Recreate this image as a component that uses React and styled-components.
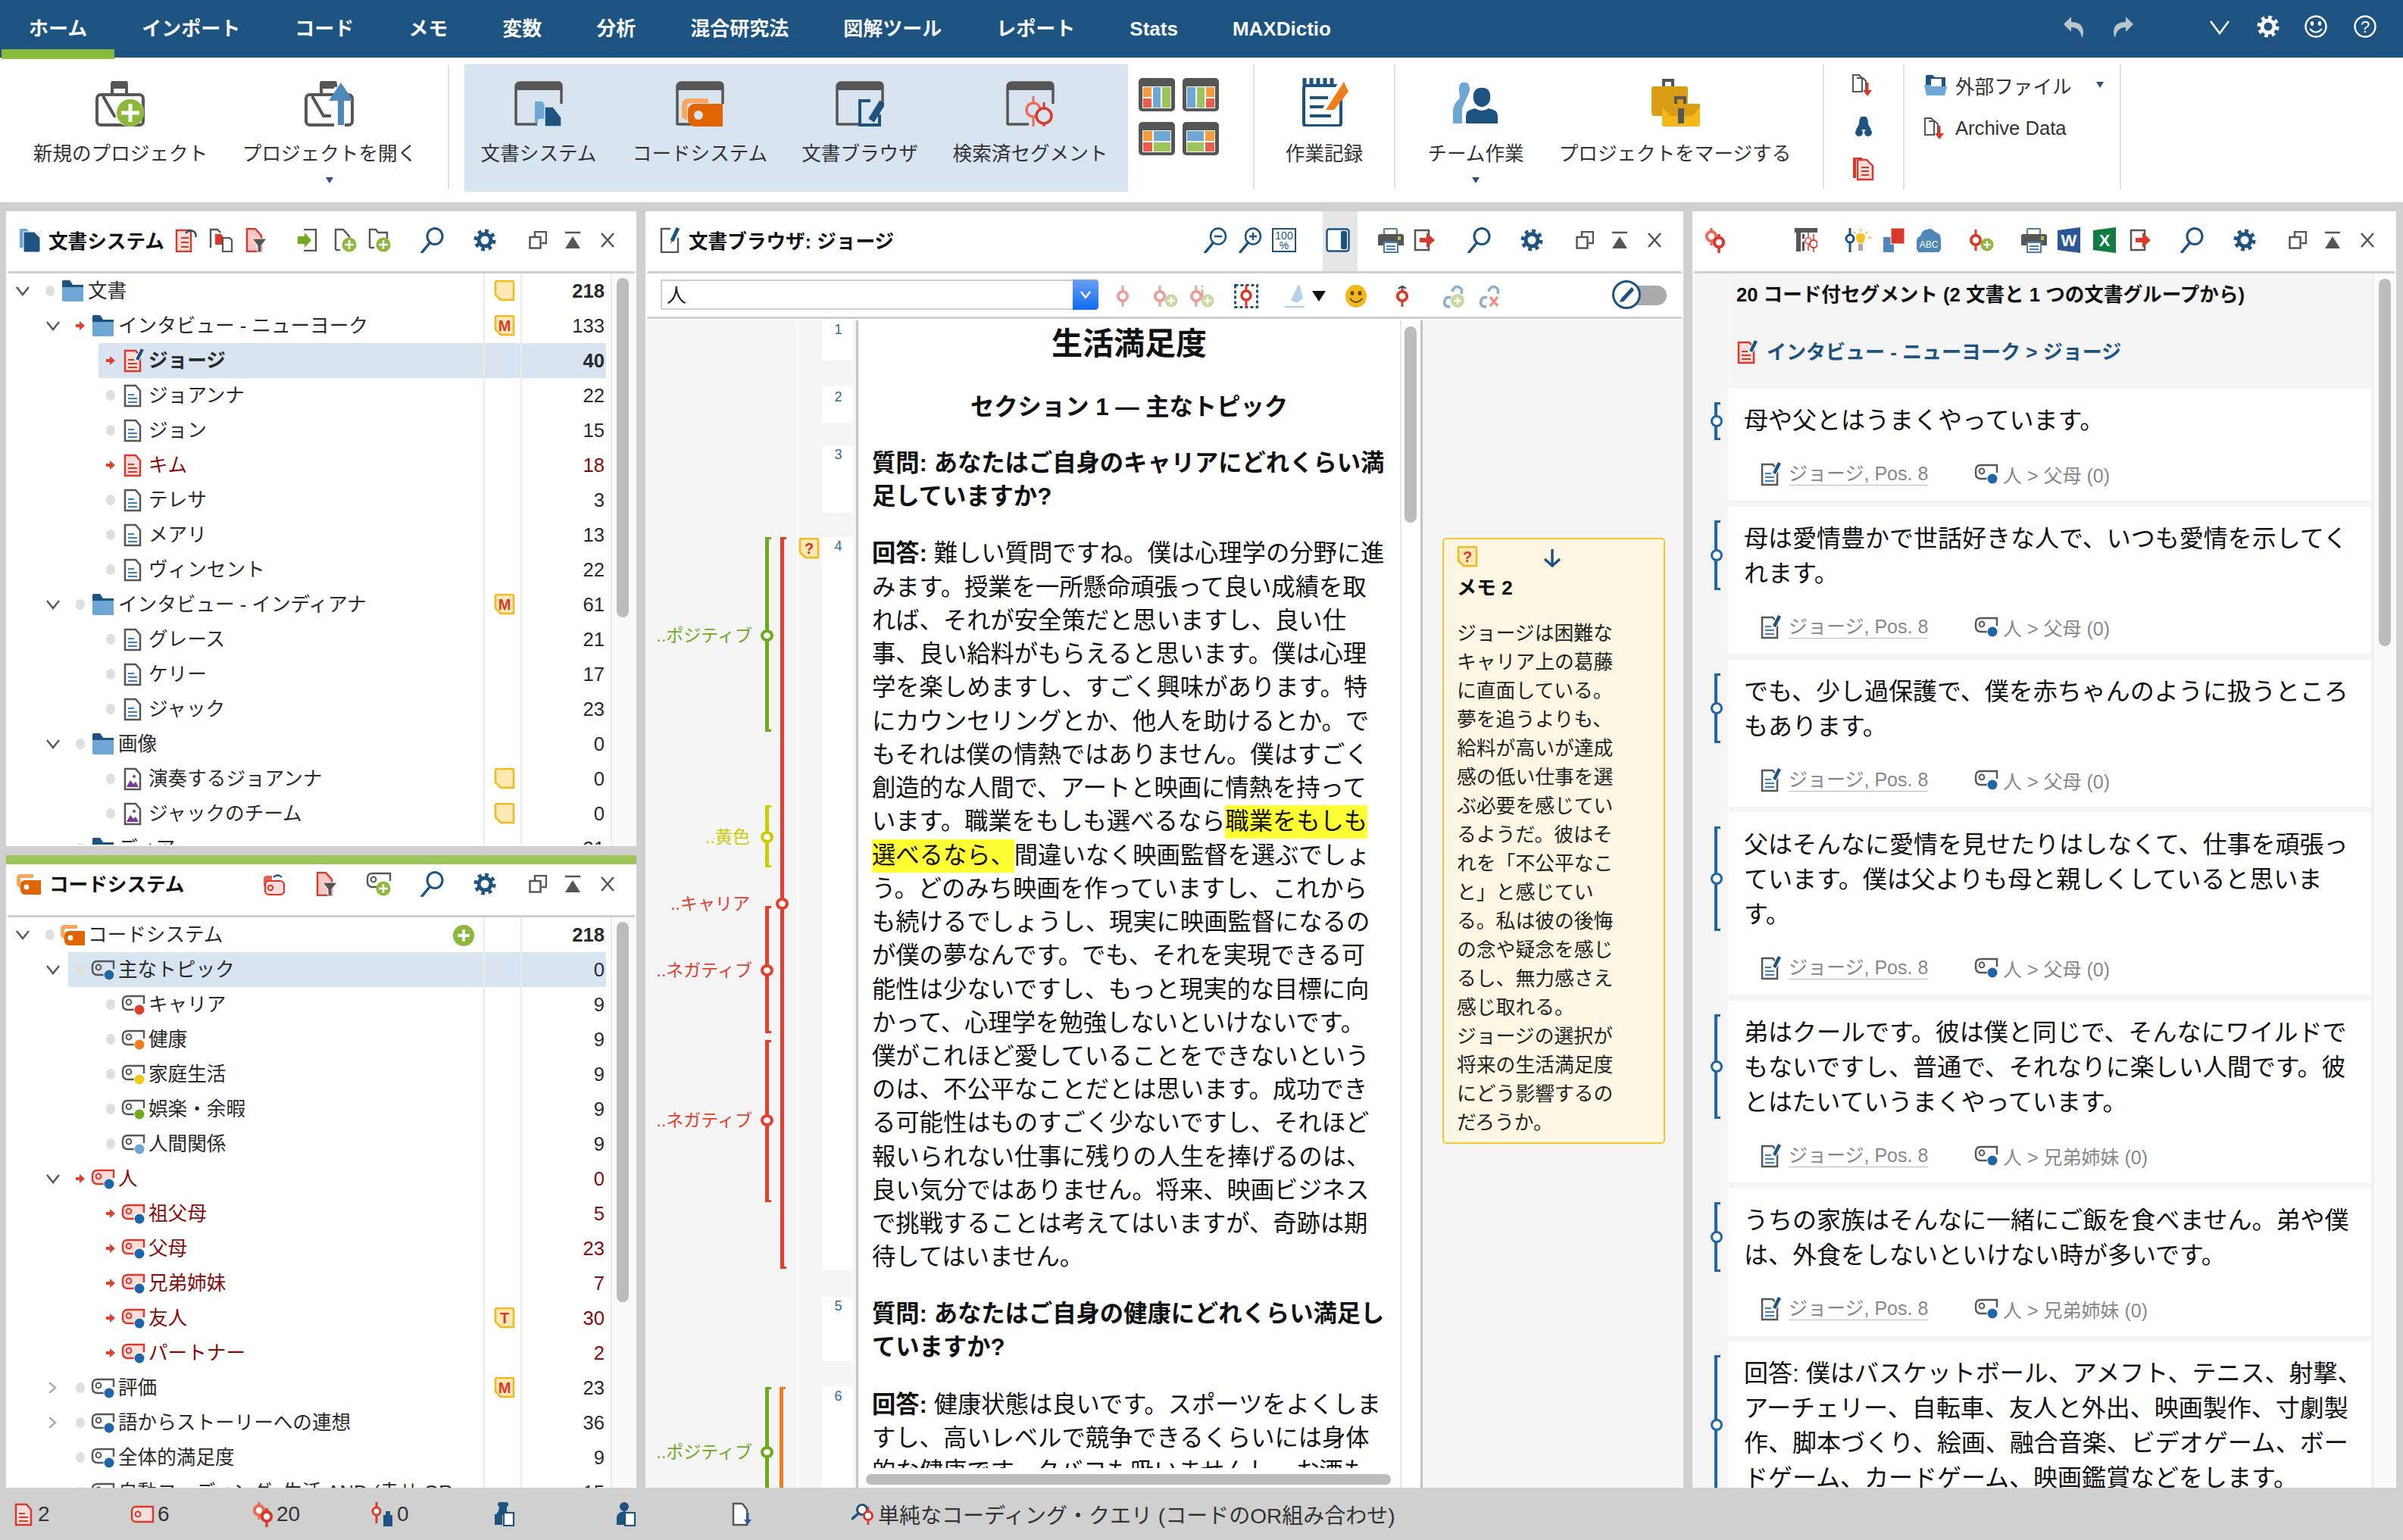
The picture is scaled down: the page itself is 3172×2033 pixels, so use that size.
import React from 'react';
import styled, { createGlobalStyle } from 'styled-components';

const NAVY = '#1d5380';
const RED = '#d8392b';
const DARK = '#565656';
const GREEN = '#8cb93b';
const SKY = '#6ea6d4';
const FONT = '"Liberation Sans", "Noto Sans CJK JP", sans-serif';

const Global = createGlobalStyle`
  html, body { margin: 0; padding: 0; background: #d0d0d0; }
  * { box-sizing: border-box; }
  body { font-family: ${FONT}; color: #222; }
  svg { display: block; flex: none; }
`;

const Page = styled.div`
  position: relative;
  width: 3172px;
  height: 2033px;
  overflow: hidden;
  background: #d0d0d0;
`;

/* ---------- icons ---------- */
const I = ({ w, h, children }) => <svg width={w} height={h} viewBox={`0 0 ${w} ${h}`} fill="none">{children}</svg>;

const Gear = ({ c = NAVY }) => (
  <I w={30} h={30}>
    <circle cx="15" cy="15" r="8" stroke={c} strokeWidth="5" />
    <circle cx="15" cy="15" r="12" stroke={c} strokeWidth="5" strokeDasharray="4.6 4.8" />
  </I>
);
const Search = ({ c = NAVY }) => (
  <I w={32} h={34}>
    <ellipse cx="20" cy="12" rx="10" ry="10.5" stroke={c} strokeWidth="3" />
    <path d="M13 21 3 33" stroke={c} strokeWidth="3.5" strokeLinecap="round" />
  </I>
);
const ZoomGlass = ({ plus, c = NAVY }) => (
  <I w={32} h={34}>
    <ellipse cx="20" cy="12" rx="10" ry="10.5" stroke={c} strokeWidth="2.5" />
    <path d="M13 21 3 33" stroke={c} strokeWidth="3.5" strokeLinecap="round" />
    <path d={plus ? 'M15 12h10M20 7v10' : 'M15 12h10'} stroke={c} strokeWidth="2.5" />
  </I>
);
const Restore = () => (
  <I w={24} h={24}>
    <path d="M8 7V1h15v15h-6" stroke={DARK} strokeWidth="2.5" />
    <rect x="1.5" y="8" width="14" height="14.5" stroke={DARK} strokeWidth="2.5" />
  </I>
);
const Collapse = () => (
  <I w={22} h={24}>
    <path d="M1 2h20" stroke={DARK} strokeWidth="2.5" />
    <path d="M11 7 21 23H1Z" fill={DARK} />
  </I>
);
const Close = () => (
  <I w={20} h={20}>
    <path d="M2 1 18 19M18 1 2 19" stroke={DARK} strokeWidth="2.6" />
  </I>
);
const Chev = ({ open = true }) => (
  <I w={20} h={14}>
    {open
      ? <path d="M2 2l8 10 8-10" stroke={DARK} strokeWidth="2.4" />
      : <path d="M5 0l8 7-8 7" stroke="#aaa" strokeWidth="2.4" />}
  </I>
);
const MiniArrow = () => (
  <I w={12} h={12}>
    <path d="M0 4h5V0l7 6-7 6V8H0Z" fill="#e2402e" />
  </I>
);
const Folder = () => (
  <I w={28} h={28}>
    <path d="M0 7V2q0-2 2-2h8l4 6h14v22H2q-2 0-2-2Z" fill={SKY} />
    <path d="M0 7V2q0-2 2-2h8l4 6h14v3H0Z" fill={NAVY} />
  </I>
);
const Doc = ({ tone = 'gray', pen }) => {
  const red = tone === 'red';
  const line = red ? RED : '#3d80c0';
  const edge = red ? RED : DARK;
  return (
    <I w={28} h={32}>
      <path d="M3 3h14l6 7v20H3Z" fill={red ? '#fbdedc' : '#fff'} stroke={edge} strokeWidth="2.5" />
      <path d="M7 15h8M7 20h12M7 25h12" stroke={line} strokeWidth="2.2" />
      {pen && <path d="M27 1 18 16" stroke="#fff" strokeWidth="7" />}
      {pen && <path d="M26 1 19 15" stroke={NAVY} strokeWidth="4.5" />}
    </I>
  );
};
const ImageDoc = () => (
  <I w={28} h={32}>
    <path d="M3 3h14l6 7v20H3Z" fill="#fff" stroke={DARK} strokeWidth="2.5" />
    <path d="M5 27l5-9 4 5 3-3 4 7Z" fill="#7a3b9a" />
    <circle cx="15" cy="13" r="2" fill="#7a3b9a" />
  </I>
);
const Note = ({ mark, w = 28, h = 28 }) => (
  <I w={w} h={h}>
    <path d="M2 3q0-2 2-2h20q2 0 2 2v23H9l-7-7Z" fill="#fde9b5" stroke="#f5b81c" strokeWidth="2.5" />
    {mark && <text x="14" y="21" textAnchor="middle" fontFamily={FONT} fontWeight="700" fontSize="20" fill={RED}>{mark}</text>}
  </I>
);
const CodeTag = ({ dot = '#1f66a8', active }) => (
  <I w={32} h={27}>
    <path d="M30 12V2H9Q2 2 2 9v4q0 7 7 7h10" fill={active ? '#fbdedc' : 'none'} stroke={active ? RED : DARK} strokeWidth="2.4" />
    <circle cx="10" cy="10" r="3.4" stroke={active ? RED : DARK} strokeWidth="2" />
    <circle cx="24" cy="20" r="7.5" fill="#fff" />
    <circle cx="24" cy="20" r="6.5" fill={dot} />
  </I>
);
const PlainTag = () => (
  <I w={32} h={24}>
    <path d="M8 2h22v20H8q-6 0-6-6V8q0-6 6-6Z" fill="#fbdedc" stroke={RED} strokeWidth="2.4" />
    <circle cx="10" cy="12" r="3.4" stroke={RED} strokeWidth="2" />
  </I>
);
const CodeSystem = () => (
  <I w={32} h={28}>
    <path d="M0 16V6q0-5 5-5h17v5H7q-2 0-2 2v12Z" fill="#f7a85c" />
    <rect x="5" y="9" width="27" height="19" rx="6" fill="#e06400" />
    <path d="M28 9h4v19h-6Z" fill="#e06400" />
    <circle cx="13" cy="18" r="3.4" fill="#fff" />
  </I>
);
const DocSystem = () => (
  <I w={30} h={32}>
    <path d="M1 2q0-1 1-1h8l3 3v22H1Z" fill={SKY} />
    <path d="M6 5h14l8 8v17q0 2-2 2H8q-2 0-2-2Z" fill={NAVY} stroke="#fff" strokeWidth="1" />
  </I>
);
const Plus = ({ r = 12, c = GREEN }) => (
  <I w={r * 2} h={r * 2}>
    <circle cx={r} cy={r} r={r} fill={c} />
    <path d={`M${r} ${r * 0.45}V${r * 1.55}M${r * 0.45} ${r}H${r * 1.55}`} stroke="#fff" strokeWidth={r * 0.28} />
  </I>
);
const Seg = ({ main = RED, back = '#ee6a58' }) => (
  <I w={28} h={34}>
    <path d="M9 1v23" stroke={back} strokeWidth="3.4" />
    <circle cx="9" cy="12" r="6.2" fill="#fff" stroke={back} strokeWidth="4" />
    <path d="M19 9v25" stroke={main} strokeWidth="3.4" />
    <circle cx="19" cy="20" r="6.2" fill="#fff" stroke={main} strokeWidth="4" />
  </I>
);
const OneSeg = ({ c = '#e8a09a', plus, info, undo, c2 = '#c7d99f' }) => (
  <I w={34} h={30}>
    <path d="M10 1v28" stroke={c} strokeWidth="3" />
    <circle cx="10" cy="15" r="6.2" fill="#fff" stroke={c} strokeWidth="3.8" />
    {info && <path d="M18 1v2M18 6v10" stroke="#e8a09a" strokeWidth="2.5" />}
    {plus && <circle cx="25" cy="21" r="8.5" fill={c2} />}
    {plus && <path d="M25 16v10M20 21h10" stroke="#fff" strokeWidth="2.4" />}
    {undo && <path d="M5 5q5-5 10 0" stroke={NAVY} strokeWidth="2.2" />}
  </I>
);
const Export = () => (
  <I w={30} h={30}>
    <path d="M20 9V2H2v26h18v-7" stroke={DARK} strokeWidth="2.5" />
    <path d="M8 12h9V5l11 10-11 10v-7H8Z" fill={RED} />
  </I>
);
const Printer = () => (
  <I w={34} h={34}>
    <path d="M8 10V3q0-1 1-1h15q1 0 1 1v7" stroke="#4a7fb0" strokeWidth="2" />
    <path d="M0 12q0-3 3-3h28q3 0 3 3v12H0Z" fill={DARK} />
    <rect x="26" y="12" width="4" height="5" fill="#9ccc5a" />
    <rect x="8" y="20" width="18" height="13" fill="#fff" stroke="#4a7fb0" strokeWidth="2" />
    <path d="M11 25h12M11 29h12" stroke="#4a7fb0" strokeWidth="2" />
  </I>
);
const Word = () => (
  <I w={30} h={34}>
    <path d="M0 4 30 0v34L0 30Z" fill="#2b5797" />
    <text x="15" y="25" textAnchor="middle" fontFamily={FONT} fontWeight="700" fontSize="22" fill="#fff">W</text>
  </I>
);
const Excel = () => (
  <I w={30} h={34}>
    <path d="M0 4 30 0v34L0 30Z" fill="#107c41" />
    <text x="15" y="25" textAnchor="middle" fontFamily={FONT} fontWeight="700" fontSize="22" fill="#fff">X</text>
  </I>
);

const Windowed = ({ children }) => (
  <I w={64} h={60}>
    <path d="M2 58V8q0-6 6-6h50q4 0 4 6v22" stroke={DARK} strokeWidth="3.5" fill="none" />
    <path d="M2 12V8q0-6 6-6h50q4 0 4 6v4Z" fill={DARK} />
    <path d="M2 57h28" stroke={DARK} strokeWidth="3.5" />
    {children}
  </I>
);
const WinDocs = () => (
  <Windowed>
    <path d="M27 27h10l3 5v18h-9v6h-4Z" fill={SKY} />
    <path d="M40 52V34h11l11 14v12H40Z" fill={NAVY} stroke="#d8e4f0" strokeWidth="1.5" />
  </Windowed>
);
const WinCodes = () => (
  <Windowed>
    <path d="M8 48V32q0-9 9-9h26v6H20q-5 0-5 5v18Z" fill="#f7a85c" />
    <rect x="16" y="30" width="46" height="30" rx="9" fill="#e06400" />
    <path d="M50 30h12v30H50Z" fill="#e06400" />
    <circle cx="30" cy="45" r="6" fill="#d8e4f0" />
  </Windowed>
);
const WinBrowser = () => (
  <Windowed>
    <path d="M60 24H32v36h26V36" fill="#d8e4f0" />
    <path d="M46 26H32v32h26V44" stroke={NAVY} strokeWidth="4" />
    <path d="M62 28 47 52" stroke={NAVY} strokeWidth="9" />
  </Windowed>
);
const WinSegs = () => (
  <Windowed>
    <path d="M36 20v42" stroke="#ee6a58" strokeWidth="3" />
    <circle cx="36" cy="38" r="9" fill="#d8e4f0" stroke="#ee6a58" strokeWidth="3.5" />
    <path d="M50 28v36" stroke={RED} strokeWidth="3" />
    <circle cx="50" cy="46" r="10" fill="#d8e4f0" stroke={RED} strokeWidth="3.5" />
  </Windowed>
);
const Bag = ({ extra, badge }) => (
  <I w={66} h={60}>
    <path d="M22 18V4q0-3 3-3h13q3 0 3 3v14" stroke={DARK} strokeWidth="4" />
    <path d="M22 10V4q0-3 3-3h13q3 0 3 3v6Z" fill={DARK} />
    <rect x="2" y="18" width="61" height="40" rx="5" stroke={DARK} strokeWidth="4" />
    <path d="M10 20 25 46h10" stroke={DARK} strokeWidth="4" />
    {badge && <circle cx="45" cy="41" r="19" fill="#fff" />}
    {badge && <circle cx="46" cy="42" r="18" fill={GREEN} />}
    {badge && <path d="M46 30v24M34 42h24" stroke="#fff" strokeWidth="5" />}
    {extra}
  </I>
);
const OpenBag = () => (
  <Bag extra={<>
    <path d="M46 60V8" stroke="#fff" strokeWidth="14" />
    <path d="M48 58V24" stroke="#4f87b8" strokeWidth="8" />
    <path d="M32 26 48 2l16 24Z" fill="#4f87b8" />
  </>} />
);
const Layout = ({ v }) => {
  const O = '#f59b3c', R = '#ee5c4d', B = SKY, G = '#9bc45a';
  const cell = (x, y, w, h, f) => <rect x={x} y={y} width={w} height={h} fill={f} />;
  return (
    <I w={48} h={44}>
      <rect width="48" height="44" rx="5" fill={DARK} />
      <rect x="5" y="11" width="38" height="29" fill="#fff" />
      {v === 0 && <>{cell(6, 12, 11, 13, O)}{cell(6, 27, 11, 12, R)}{cell(19, 12, 10, 27, B)}{cell(31, 12, 11, 27, G)}</>}
      {v === 1 && <>{cell(6, 12, 11, 27, B)}{cell(19, 12, 10, 27, G)}{cell(31, 12, 11, 13, O)}{cell(31, 27, 11, 12, R)}</>}
      {v === 2 && <>{cell(6, 12, 12, 13, O)}{cell(6, 27, 12, 12, R)}{cell(20, 12, 22, 13, B)}{cell(20, 27, 22, 12, G)}</>}
      {v === 3 && <>{cell(6, 12, 22, 13, B)}{cell(6, 27, 22, 12, G)}{cell(30, 12, 12, 13, O)}{cell(30, 27, 12, 12, R)}</>}
    </I>
  );
};
const LogBook = () => (
  <I w={64} h={64}>
    <path d="M6 10h44q4 0 4 4v46q0 3-3 3H8q-3 0-3-3V14q0-4 3-4Z" stroke={NAVY} strokeWidth="4" fill="#fff" />
    <path d="M6 0v10M15 0v10M24 0v10M33 0v10M42 0v10" stroke={NAVY} strokeWidth="5" />
    <path d="M13 26h24M13 38h24M13 50h28" stroke={NAVY} strokeWidth="4" />
    <path d="M60 4 44 40H30L52 4Z" fill="#fff" />
    <path d="M58 5 64 18 45 42H34Z" fill="#ee7d1a" />
  </I>
);
const Team = () => (
  <I w={60} h={60}>
    <path d="M12 2q10-2 10 8 0 6-4 12l-6 14v20H0V38q2-10 8-14 2-2 0-10-1-10 4-12Z" fill={SKY} />
    <path d="M38 8q12 0 12 13 0 12-12 14-12-2-12-14 0-13 12-13Z" fill={NAVY} stroke="#fff" strokeWidth="1.5" />
    <path d="M17 56V46q0-8 12-10 9 6 18 0 12 2 12 10v10Z" fill={NAVY} />
  </I>
);
const Merge = () => (
  <I w={66} h={64}>
    <path d="M18 12V3h12v9" stroke={DARK} strokeWidth="4" />
    <path d="M2 14q0-3 3-3h42q3 0 3 3v22H30v14H6q-4 0-4-4Z" fill="#d99e14" />
    <path d="M34 36V26h12v10" stroke={DARK} strokeWidth="4" />
    <rect x="16" y="34" width="50" height="30" rx="3" fill="#f5b819" />
    <path d="M16 34h50v4L56 50H26L16 38Z" fill="#d99e14" />
    <rect x="37" y="40" width="8" height="20" fill={DARK} />
  </I>
);
const ArchiveDoc = () => (
  <I w={30} h={30}>
    <path d="M1 2h8l4 4v18H1Z" stroke={DARK} strokeWidth="2" />
    <path d="M6 6h8l4 4v12" stroke={DARK} strokeWidth="2" />
    <path d="M20 12v12" stroke={RED} strokeWidth="3" />
    <path d="M14 22h12l-6 8Z" fill={RED} />
  </I>
);
const Spy = () => (
  <I w={30} h={26}>
    <path d="M12 0h6q3 2 3 10l4 7H5l4-7q0-8 3-10Z" fill={NAVY} />
    <circle cx="9" cy="21" r="5" fill={NAVY} />
    <circle cx="21" cy="21" r="5" fill={NAVY} />
  </I>
);
const RedDocs = () => (
  <I w={30} h={32}>
    <path d="M1 1h12v2H5v25H1Z" fill={RED} />
    <path d="M7 4h12l8 8v18H7Z" fill="#fbdedc" stroke={RED} strokeWidth="2.4" />
    <path d="M12 14h10M12 19h10M12 24h10" stroke={RED} strokeWidth="2.2" />
  </I>
);
const OpenFolder = () => (
  <I w={30} h={28}>
    <path d="M2 20V3q0-2 2-2h7l3 3h14v16Z" fill={NAVY} />
    <path d="M9 6h14v14H9Z" fill="#fff" />
    <path d="M0 14h8l2 2h20l-3 12H3Z" fill={SKY} />
  </I>
);
const Caret = ({ c = '#2f4f86' }) => <I w={12} h={10}><path d="M1 1h10L6 9Z" fill={c} /></I>;
const FilterDoc = () => (
  <I w={28} h={32}>
    <path d="M2 1h11l8 9v21H2Z" fill="#f9c8c4" stroke={RED} strokeWidth="2.4" />
    <path d="M9 14h19l-7 9v9h-5V23Z" fill={DARK} stroke="#fff" strokeWidth="1" />
  </I>
);
const UndoDoc = () => (
  <I w={30} h={32}>
    <path d="M2 3h19v28H2Z" fill="#fbdedc" stroke={RED} strokeWidth="2.4" />
    <path d="M8 13h10M8 19h10M8 25h10" stroke={RED} strokeWidth="2.2" />
    <path d="M14 7q4-5 10-3 5 3 3 8" stroke={NAVY} strokeWidth="2.4" />
  </I>
);
const CopyDocs = () => (
  <I w={32} h={32}>
    <path d="M2 26V2h9l4 4" stroke={DARK} strokeWidth="2.4" />
    <path d="M8 8h8l3 4v10H8Z" fill={RED} />
    <path d="M18 13h9l3 3v15H18Z" fill="#fff" stroke={DARK} strokeWidth="2.2" />
  </I>
);
const ImportArrow = () => (
  <I w={26} h={30}>
    <path d="M8 1h16v28H8" stroke={DARK} strokeWidth="2.4" />
    <path d="M0 10h9V5l9 10-9 10v-5H0Z" fill="#6faa1e" />
  </I>
);
const DocPlus = ({ folder }) => (
  <I w={30} h={32}>
    {folder
      ? <path d="M2 26V2h8l3 4h12v8" stroke={DARK} strokeWidth="2.4" />
      : <path d="M2 29V2h10l8 9v3" stroke={DARK} strokeWidth="2.4" />}
    {folder ? null : <path d="M2 29h6" stroke={DARK} strokeWidth="2.4" />}
    {folder && <path d="M2 26h6" stroke={DARK} strokeWidth="2.4" />}
    <circle cx="20" cy="22" r="9.5" fill={GREEN} />
    <path d="M20 16v12M14 22h12" stroke="#fff" strokeWidth="2.6" />
  </I>
);
const TagUndo = () => (
  <I w={32} h={30}>
    <path d="M4 18V8q0-4 5-4h6v14Z" fill="#e85f50" />
    <rect x="6" y="11" width="25" height="18" rx="5" fill="#fbdedc" stroke={RED} strokeWidth="2.2" />
    <circle cx="13" cy="20" r="3.2" stroke={RED} strokeWidth="2" />
    <path d="M17 6q5-5 11 0" stroke={NAVY} strokeWidth="2.2" />
  </I>
);
const TagAdd = () => (
  <I w={34} h={32}>
    <path d="M32 12V2H9Q2 2 2 9v4q0 7 7 7h10" stroke={DARK} strokeWidth="2.4" />
    <circle cx="10" cy="10" r="3.4" stroke={DARK} strokeWidth="2" />
    <circle cx="23" cy="22" r="9.5" fill={GREEN} />
    <path d="M23 16v12M17 22h12" stroke="#fff" strokeWidth="2.6" />
  </I>
);
const PenDoc = () => (
  <I w={26} h={34}>
    <path d="M14 2H2v31h22V14" stroke={DARK} strokeWidth="2.4" />
    <path d="M24 1 16 18" stroke={NAVY} strokeWidth="5" />
    <path d="M15 18h2l-3 4Z" fill={NAVY} />
  </I>
);
const HundredPct = () => (
  <I w={32} h={32}>
    <rect x="1" y="1" width="30" height="30" stroke={NAVY} strokeWidth="2" />
    <text x="16" y="15" textAnchor="middle" fontFamily={FONT} fontSize="14" fill={NAVY}>100</text>
    <text x="16" y="28" textAnchor="middle" fontFamily={FONT} fontSize="14" fill={NAVY}>%</text>
  </I>
);
const PanelToggle = () => (
  <I w={32} h={32}>
    <rect x="1.5" y="1.5" width="29" height="29" rx="3" stroke={NAVY} strokeWidth="2.4" fill="#fff" />
    <rect x="20" y="4" width="8" height="24" rx="2" fill={NAVY} />
  </I>
);
const CodeMap = () => (
  <I w={30} h={32}>
    <rect width="30" height="6" fill={DARK} />
    <path d="M2 6h6v25H2ZM10 8h3v6h-3ZM10 18h3v12h-3Z" fill={DARK} />
    <path d="M18 6v24M25 8v24" stroke="#ee6a58" strokeWidth="2" />
    <circle cx="18" cy="17" r="4" fill="#fff" stroke="#ee6a58" strokeWidth="2" />
    <circle cx="25" cy="21" r="5" fill="#fff" stroke={RED} strokeWidth="2" />
  </I>
);
const Bulb = () => (
  <I w={36} h={32}>
    <path d="M7 0v32" stroke={NAVY} strokeWidth="3" />
    <circle cx="7" cy="14" r="5" fill="#fff" stroke={NAVY} strokeWidth="3" />
    <path d="M15 12q0-5 6-5t6 5q0 4-3 8h-6q-3-4-3-8Z" fill="#f5c020" />
    <rect x="18" y="21" width="6" height="9" fill="#aaa" />
    <path d="M21 1v3M12 5l2 2M30 5l-2 2M31 13h4" stroke="#f5c020" strokeWidth="2" />
  </I>
);
const Squares = () => (
  <I w={28} h={32}>
    <rect y="12" width="14" height="20" fill="#4f87b8" />
    <rect x="10" width="18" height="21" fill={RED} stroke="#fff" strokeWidth="1" />
  </I>
);
const Cloud = () => (
  <I w={32} h={34}>
    <path d="M3 33q-3-2-3-6v-9q0-5 5-6 2-9 9-9 5-3 10 3 8 2 8 10v11q0 4-3 6Z" fill="#4f87b8" />
    <text x="16" y="27" textAnchor="middle" fontFamily={FONT} fontSize="12" fill="#fff">ABC</text>
  </I>
);
const Marker = () => (
  <I w={32} h={32}>
    <path d="M8 22 17 2q2-1 3 1l4 16-8 6Z" fill="#b5d2ea" />
    <path d="M0 30h26" stroke="#b5d2ea" strokeWidth="2.5" />
  </I>
);
const Smile = () => (
  <I w={28} h={30}>
    <ellipse cx="14" cy="15" rx="14" ry="15" fill="#f5b819" />
    <ellipse cx="9" cy="11" rx="2.4" ry="3" fill="#5a4610" />
    <ellipse cx="19" cy="11" rx="2.4" ry="3" fill="#5a4610" />
    <path d="M6 18q8 10 16 0" stroke="#5a4610" strokeWidth="2" />
  </I>
);
const Links = ({ plus }) => (
  <I w={32} h={32}>
    <path d="M12 18q-6-2-8 4-2 8 7 8M14 10q2-8 9-6 5 2 3 9" stroke="#8eb0cc" strokeWidth="3.5" />
    {plus
      ? <><circle cx="21" cy="22" r="9" fill="#c7d99f" /><path d="M21 17v10M16 22h10" stroke="#fff" strokeWidth="2.4" /></>
      : <path d="M16 17 26 29M26 17 16 29" stroke="#ee9088" strokeWidth="3.5" />}
  </I>
);
const UserDoc = ({ kind }) => (
  <I w={28} h={32}>
    {kind === 'tall'
      ? <><rect x="5" y="0" width="14" height="6" rx="3" fill={NAVY} /><path d="M7 6h10v6l4 5H2l4-5Z" fill={NAVY} /><path d="M1 16h10v14H1Z" fill={NAVY} /></>
      : <><ellipse cx="12" cy="6" rx="6" ry="6" fill={NAVY} /><path d="M2 30V20q0-6 10-8 10 2 10 8v10Z" fill={NAVY} /></>}
    <rect x="13" y="14" width="13" height="17" fill="#fff" stroke={NAVY} strokeWidth="2.2" />
  </I>
);
const Bottle = () => (
  <I w={32} h={32}>
    <path d="M9 0v28" stroke={RED} strokeWidth="3" />
    <circle cx="9" cy="12" r="5" fill="#fff" stroke={RED} strokeWidth="3" />
    <path d="M21 12h6v5h3v15H18V17h3Z" fill={NAVY} />
  </I>
);
const ExportDocDown = () => (
  <I w={28} h={32}>
    <path d="M14 2H2v28h18V10l-6-8" stroke={DARK} strokeWidth="2.4" fill="#fff" />
    <path d="M21 14v10" stroke="#2f5f96" strokeWidth="3" />
    <path d="M16 23h10l-5 7Z" fill="#2f5f96" />
  </I>
);
const QueryGlass = () => (
  <I w={30} h={28}>
    <circle cx="14" cy="8" r="6.5" fill="#fff" stroke={NAVY} strokeWidth="3" />
    <path d="M9 13 1 20" stroke={NAVY} strokeWidth="3.5" strokeLinecap="round" />
    <path d="M22 4v24" stroke={RED} strokeWidth="2.6" />
    <circle cx="22" cy="16" r="5.5" fill="#fff" stroke={RED} strokeWidth="3" />
  </I>
);

/* ---------- top navigation ---------- */
const TopBar = styled.header`
  position: relative;
  display: flex;
  height: 76px;
  background: ${NAVY};
`;
const Tab = styled.div`
  height: 78px;
  padding: 0 36px 4px;
  line-height: 76px;
  font-size: 26px;
  font-weight: 700;
  color: #fff;
  white-space: nowrap;
  border-bottom: ${(p) => (p.$active ? '13px solid #8cc03c' : '0')};
  margin-left: ${(p) => (p.$active ? '2px' : '0')};
  opacity: 0.96;
`;
const NavIcons = styled.div`
  position: absolute;
  top: 0;
  right: 0;
  height: 76px;
  width: 3172px;
  pointer-events: none;
`;
const NavIcon = styled.span`
  position: absolute;
  top: 20px;
  left: ${(p) => p.$x}px;
`;
const navTabs = ['ホーム', 'インポート', 'コード', 'メモ', '変数', '分析', '混合研究法', '図解ツール', 'レポート', 'Stats', 'MAXDictio'];

const Nav = () => (
  <TopBar>
    {navTabs.map((t, i) => <Tab key={t} $active={i === 0}>{t}</Tab>)}
    <NavIcons>
      <NavIcon $x={2722}>
        <I w={30} h={30}>
          <path d="M2 12 12 2v7q16 0 16 14 0 4-2 7-2-14-14-14v6Z" fill="#b9c4cd" />
        </I>
      </NavIcon>
      <NavIcon $x={2788}>
        <I w={30} h={30}>
          <path d="M28 12 18 2v7Q2 9 2 23q0 4 2 7 2-14 14-14v6Z" fill="#b9c4cd" />
        </I>
      </NavIcon>
      <NavIcon $x={2916}>
        <I w={28} h={30}><path d="M2 8l12 16L26 8" stroke="#fff" strokeWidth="2.6" /></I>
      </NavIcon>
      <NavIcon $x={2979}><Gear c="#fff" /></NavIcon>
      <NavIcon $x={3042}>
        <I w={30} h={30}>
          <ellipse cx="15" cy="15" rx="13.5" ry="13.5" stroke="#fff" strokeWidth="2.4" />
          <ellipse cx="10" cy="11" rx="2.2" ry="3" fill="#fff" />
          <ellipse cx="20" cy="11" rx="2.2" ry="3" fill="#fff" />
          <path d="M7 18q8 9 16 0" stroke="#fff" strokeWidth="2.2" />
        </I>
      </NavIcon>
      <NavIcon $x={3107}>
        <I w={30} h={30}>
          <ellipse cx="15" cy="15" rx="13.5" ry="13.5" stroke="#fff" strokeWidth="2.4" />
          <text x="15" y="23" textAnchor="middle" fontFamily={FONT} fontSize="22" fill="#fff">?</text>
        </I>
      </NavIcon>
    </NavIcons>
  </TopBar>
);

/* ---------- ribbon ---------- */
const Ribbon = styled.section`
  display: flex;
  height: 191px;
  background: #fff;
`;
const Sep = styled.div`
  width: 2px;
  height: 165px;
  margin-top: 9px;
  background: #e2e2e2;
  flex: none;
`;
const Highlight = styled.div`
  display: flex;
  height: 168px;
  margin: 9px 0 0 20px;
  background: #d8e4f0;
`;
const Big = styled.div`
  position: relative;
  width: ${(p) => p.$w}px;
  flex: none;
  height: ${(p) => (p.$inset ? 168 : 191)}px;
  padding-top: ${(p) => (p.$inset ? 18 : 27)}px;
  display: flex;
  flex-direction: column;
  align-items: center;
`;
const BigIcon = styled.div`
  height: 64px;
  display: flex;
  align-items: flex-end;
`;
const BigLabel = styled.div`
  position: absolute;
  top: ${(p) => (p.$inset ? 100 : 109)}px;
  left: -20px;
  right: -20px;
  text-align: center;
  font-size: 25.6px;
  line-height: 36px;
  color: #333;
  white-space: nowrap;
`;
const DropMark = styled.div`
  position: absolute;
  top: 157px;
  left: 50%;
  margin-left: -6px;
`;
const LayoutGrid = styled.div`
  display: grid;
  grid-template-columns: 48px 48px;
  gap: 14px 10px;
  margin: 27px 45px 0 14px;
  height: 102px;
`;
const SmallCol = styled.div`
  width: 104px;
  flex: none;
  display: flex;
  flex-direction: column;
  align-items: center;
  gap: 27px;
  padding-top: 21px;
`;
const ExternalCol = styled.div`
  width: 284px;
  flex: none;
  padding: 20px 0 0 26px;
`;
const ExternalRow = styled.div`
  display: flex;
  align-items: center;
  height: 32px;
  margin-bottom: 25px;
  font-size: 25.6px;
  color: #333;
  gap: 11px;
  white-space: nowrap;
`;
const RibbonCaret = styled.span`
  margin-left: 20px;
`;

const BigButton = ({ w, icon, label, inset, drop }) => (
  <Big $w={w} $inset={inset}>
    <BigIcon>{icon}</BigIcon>
    <BigLabel $inset={inset}>{label}</BigLabel>
    {drop && <DropMark><Caret /></DropMark>}
  </Big>
);

const RibbonBar = () => (
  <Ribbon>
    <BigButton w={318} icon={<Bag badge />} label="新規のプロジェクト" />
    <BigButton w={234} icon={<OpenBag />} label="プロジェクトを開く" drop />
    <Big $w={39} />
    <Sep />
    <Highlight>
      <BigButton inset w={196} icon={<WinDocs />} label="文書システム" />
      <BigButton inset w={230} icon={<WinCodes />} label="コードシステム" />
      <BigButton inset w={192} icon={<WinBrowser />} label="文書ブラウザ" />
      <BigButton inset w={258} icon={<WinSegs />} label="検索済セグメント" />
    </Highlight>
    <LayoutGrid>
      <Layout v={0} /><Layout v={1} /><Layout v={2} /><Layout v={3} />
    </LayoutGrid>
    <Sep />
    <BigButton w={184} icon={<LogBook />} label="作業記録" />
    <Sep />
    <BigButton w={212} icon={<Team />} label="チーム作業" drop />
    <BigButton w={314} icon={<Merge />} label="プロジェクトをマージする" />
    <Big $w={38} />
    <Sep />
    <SmallCol><ArchiveDoc /><Spy /><RedDocs /></SmallCol>
    <Sep />
    <ExternalCol>
      <ExternalRow><OpenFolder />外部ファイル<RibbonCaret><Caret /></RibbonCaret></ExternalRow>
      <ExternalRow><ArchiveDoc />Archive Data</ExternalRow>
    </ExternalCol>
    <Sep />
  </Ribbon>
);

/* ---------- panels ---------- */
const Workspace = styled.main`
  position: absolute;
  top: 279px;
  left: 8px;
  width: 3155px;
  height: 1685px;
  display: flex;
`;
const LeftCol = styled.div`
  width: 832px;
  flex: none;
  display: flex;
  flex-direction: column;
`;
const Panel = styled.section`
  position: relative;
  background: #fff;
  width: ${(p) => p.$w || 832}px;
  height: ${(p) => p.$h}px;
  margin-left: ${(p) => p.$gap || 0}px;
  flex: none;
  overflow: hidden;
`;
const GreenBar = styled.div`
  height: 12px;
  margin-top: 12px;
  background: #9bc45a;
`;
const PanelHead = styled.div`
  position: relative;
  height: ${(p) => p.$h || 82}px;
  border-bottom: 3px solid #cfcfcf;
  margin: 0 2px;
`;
const HeadTitle = styled.div`
  position: absolute;
  left: ${(p) => p.$x}px;
  top: ${(p) => p.$top || 22}px;
  font-size: 25.6px;
  line-height: 36px;
  font-weight: 700;
  color: #111;
  white-space: nowrap;
`;
const Tool = styled.span`
  position: absolute;
  left: ${(p) => p.$x}px;
  top: ${(p) => p.$top || 38}px;
  transform: translate(-50%, -50%);
`;
const ToolPressed = styled.div`
  position: absolute;
  left: ${(p) => p.$x}px;
  top: 0;
  width: 46px;
  height: 79px;
  background: #e6e6e6;
`;
const Tools = ({ base, items, top }) => items.map(([x, node], i) => (
  <Tool key={i} $x={x - base} $top={top}>{node}</Tool>
));

/* ---------- tree ---------- */
const Tree = styled.div`
  position: relative;
  height: ${(p) => p.$h}px;
  overflow: hidden;
  &::before, &::after {
    content: '';
    position: absolute;
    top: 0;
    bottom: 0;
    width: 2px;
    background: #ececec;
    z-index: 2;
  }
  &::before { left: 630px; }
  &::after { left: 679px; }
`;
const TreeScroll = styled.div`
  position: absolute;
  top: 0;
  bottom: 0;
  left: 798px;
  width: 32px;
  background: #fafafa;
  border-left: 2px solid #ececec;
  z-index: 3;
`;
const Thumb = styled.div`
  position: absolute;
  left: ${(p) => p.$left}px;
  top: ${(p) => p.$top}px;
  width: 16px;
  height: ${(p) => p.$h}px;
  border-radius: 8px;
  background: #bcbcbc;
`;
const Row = styled.div`
  position: relative;
  display: flex;
  align-items: center;
  height: 46px;
  width: 792px;
  padding-left: ${(p) => 12 + 40 * p.$level}px;
  color: ${(p) => (p.$red ? '#8a0a0a' : '#2a2a2a')};
  font-size: 25.6px;
  &::before {
    content: '';
    display: ${(p) => (p.$selected ? 'block' : 'none')};
    position: absolute;
    top: 0;
    bottom: 0;
    left: ${(p) => 42 + 40 * p.$level}px;
    right: 0;
    background: #d8e4f0;
  }
`;
const Toggle = styled.span`
  position: relative;
  width: 20px;
  height: 14px;
  flex: none;
`;
const Mark = styled.span`
  position: relative;
  width: 12px;
  margin-left: 20px;
  flex: none;
`;
const Dot = styled.span`
  display: block;
  width: 12px;
  height: 14px;
  border-radius: 50%;
  background: #dfdfdf;
`;
const Glyph = styled.span`
  position: relative;
  display: flex;
  justify-content: center;
  width: 32px;
  margin-left: 8px;
  flex: none;
`;
const Label = styled.span`
  position: relative;
  margin-left: 4px;
  font-weight: ${(p) => (p.$bold ? 700 : 400)};
  white-space: nowrap;
  line-height: 46px;
`;
const NoteSlot = styled.span`
  position: absolute;
  left: 644px;
  top: 9px;
`;
const AddSlot = styled.span`
  position: absolute;
  left: 590px;
  top: 10px;
`;
const Count = styled.span`
  position: absolute;
  right: 2px;
  top: 0;
  line-height: 46px;
  font-weight: ${(p) => (p.$bold ? 700 : 400)};
`;

const TreeRow = ({ r }) => (
  <Row $level={r.l} $selected={r.sel} $red={r.red}>
    <Toggle>{r.open !== undefined && <Chev open={r.open} />}</Toggle>
    <Mark>{r.active ? <MiniArrow /> : <Dot />}</Mark>
    <Glyph>{r.icon}</Glyph>
    <Label $bold={r.bold}>{r.t}</Label>
    {r.note !== undefined && <NoteSlot><Note mark={r.note} /></NoteSlot>}
    {r.add && <AddSlot><Plus r={14} /></AddSlot>}
    <Count $bold={r.bold || r.boldCount}>{r.n}</Count>
  </Row>
);

const D = <Doc />;
const docRows = [
  { l: 0, t: '文書', n: 218, open: true, icon: <Folder />, note: '', boldCount: true },
  { l: 1, t: 'インタビュー - ニューヨーク', n: 133, open: true, active: true, icon: <Folder />, note: 'M' },
  { l: 2, t: 'ジョージ', n: 40, active: true, icon: <Doc tone="red" pen />, sel: true, bold: true },
  { l: 2, t: 'ジョアンナ', n: 22, icon: D },
  { l: 2, t: 'ジョン', n: 15, icon: D },
  { l: 2, t: 'キム', n: 18, active: true, red: true, icon: <Doc tone="red" /> },
  { l: 2, t: 'テレサ', n: 3, icon: D },
  { l: 2, t: 'メアリ', n: 13, icon: D },
  { l: 2, t: 'ヴィンセント', n: 22, icon: D },
  { l: 1, t: 'インタビュー - インディアナ', n: 61, open: true, icon: <Folder />, note: 'M' },
  { l: 2, t: 'グレース', n: 21, icon: D },
  { l: 2, t: 'ケリー', n: 17, icon: D },
  { l: 2, t: 'ジャック', n: 23, icon: D },
  { l: 1, t: '画像', n: 0, open: true, icon: <Folder /> },
  { l: 2, t: '演奏するジョアンナ', n: 0, icon: <ImageDoc />, note: '' },
  { l: 2, t: 'ジャックのチーム', n: 0, icon: <ImageDoc />, note: '' },
  { l: 1, t: 'ディア', n: 31, icon: <Folder /> },
];
const tag = (dot) => <CodeTag dot={dot} />;
const redTag = <CodeTag active />;
const codeRows = [
  { l: 0, t: 'コードシステム', n: 218, open: true, icon: <CodeSystem />, add: true, boldCount: true },
  { l: 1, t: '主なトピック', n: 0, open: true, icon: tag(), sel: true },
  { l: 2, t: 'キャリア', n: 9, icon: tag('#e2402e') },
  { l: 2, t: '健康', n: 9, icon: tag('#ee7d1a') },
  { l: 2, t: '家庭生活', n: 9, icon: tag('#f0ca14') },
  { l: 2, t: '娯楽・余暇', n: 9, icon: tag('#6faa1e') },
  { l: 2, t: '人間関係', n: 9, icon: tag(SKY) },
  { l: 1, t: '人', n: 0, open: true, active: true, red: true, icon: redTag },
  { l: 2, t: '祖父母', n: 5, active: true, red: true, icon: redTag },
  { l: 2, t: '父母', n: 23, active: true, red: true, icon: redTag },
  { l: 2, t: '兄弟姉妹', n: 7, active: true, red: true, icon: redTag },
  { l: 2, t: '友人', n: 30, active: true, red: true, icon: redTag, note: 'T' },
  { l: 2, t: 'パートナー', n: 2, active: true, red: true, icon: redTag },
  { l: 1, t: '評価', n: 23, open: false, icon: tag(), note: 'M' },
  { l: 1, t: '語からストーリーへの連想', n: 36, open: false, icon: tag() },
  { l: 1, t: '全体的満足度', n: 9, icon: tag() },
  { l: 1, t: '自動コーディング: 生活 AND (幸せ OR', n: 15, icon: tag() },
];

/* ---------- document browser ---------- */
const FilterRow = styled.div`
  position: relative;
  height: 60px;
  margin: 0 2px;
  border-bottom: 3px solid #cfcfcf;
`;
const SearchBox = styled.div`
  position: absolute;
  left: 18px;
  top: 8px;
  width: 578px;
  height: 40px;
  border: 2px solid #cfcfcf;
  border-radius: 2px;
  padding-left: 6px;
  font-size: 26px;
  line-height: 38px;
  background: #fff;
`;
const SearchDrop = styled.div`
  position: absolute;
  right: -2px;
  top: -2px;
  width: 34px;
  height: 40px;
  border-radius: 0 5px 5px 0;
  background: linear-gradient(#6aa0f0, #0f6cf5);
  display: flex;
  align-items: center;
  justify-content: center;
`;
const PenToggle = styled.div`
  position: absolute;
  left: 1274px;
  top: 9px;
  width: 72px;
  height: 40px;
`;
const PenTrack = styled.div`
  position: absolute;
  left: 20px;
  top: 7px;
  width: 52px;
  height: 26px;
  border-radius: 13px;
  background: #aaa;
`;
const PenKnob = styled.div`
  position: absolute;
  left: 0;
  top: 0;
  width: 38px;
  height: 38px;
  border-radius: 50%;
  background: #fff;
  border: 3px solid ${NAVY};
  display: flex;
  align-items: center;
  justify-content: center;
`;
const MidBody = styled.div`
  position: absolute;
  top: 144px;
  left: 0;
  right: 0;
  bottom: 0;
  display: flex;
  background: #f5f5f5;
`;
const Gutter = styled.div`
  position: relative;
  width: 198px;
  flex: none;
  margin-right: 2px;
`;
const MemoRail = styled.div`
  width: 31px;
  flex: none;
  position: relative;
  border-left: 2px solid #fff;
`;
const MemoRailIcon = styled.div`
  position: absolute;
  left: 0;
  top: 287px;
`;
const NumRail = styled.div`
  position: relative;
  width: 50px;
  flex: none;
  border-right: 3px solid #c4c4c4;
  background: #f5f5f5;
`;
const NumBand = styled.div`
  position: absolute;
  left: 2px;
  right: 4px;
  top: ${(p) => p.$top - 423}px;
  height: ${(p) => p.$h}px;
  background: #fff;
`;
const Num = styled.span`
  position: absolute;
  left: 0;
  right: 0;
  top: ${(p) => p.$y - 423}px;
  text-align: center;
  font-size: 18px;
  line-height: 22px;
  color: #2d6aa0;
`;
const DocColumn = styled.div`
  position: relative;
  width: 715px;
  flex: none;
  background: #fff;
  overflow: hidden;
  padding: 2px 0 0 18px;
  font-size: 31.3px;
  color: #111;
`;
const DocTitle = styled.h1`
  margin: 0 0 0 -18px;
  height: 58px;
  line-height: 58px;
  text-align: center;
  font-size: 41px;
  font-weight: 700;
`;
const DocSection = styled.h2`
  margin: 33px 0 0 -18px;
  line-height: 44px;
  text-align: center;
  font-size: 31.3px;
  font-weight: 700;
`;
const DocPara = styled.div`
  margin-top: ${(p) => p.$gap || 31.5}px;
  line-height: 44.24px;
  white-space: nowrap;
  font-weight: ${(p) => (p.$bold ? 700 : 400)};
`;
const Line = styled.div`
  height: 44.24px;
`;
const Hl = styled.span`
  display: inline-block;
  background: #ffff33;
  line-height: 44px;
  height: 44px;
`;
const HBar = styled.div`
  position: absolute;
  left: 0;
  right: 0;
  bottom: 0;
  height: 26px;
  background: #fff;
`;
const HThumb = styled.div`
  position: absolute;
  left: 10px;
  right: 12px;
  top: 8px;
  height: 14px;
  border-radius: 7px;
  background: #bcbcbc;
`;
const DocScroll = styled.div`
  position: relative;
  width: 30px;
  flex: none;
  background: #fff;
  border-left: 2px solid #e8e8e8;
  border-right: 3px solid #c4c4c4;
`;
const MemoArea = styled.div`
  position: relative;
  flex: 1;
`;
const MemoCard = styled.div`
  position: absolute;
  left: 26px;
  top: 287px;
  width: 294px;
  height: 800px;
  background: #fdf6e3;
  border: 2px solid #f5c832;
  border-radius: 5px;
  padding: 9px 0 0 17px;
`;
const MemoTop = styled.div`
  display: flex;
  height: 30px;
  position: relative;
`;
const MemoDown = styled.span`
  position: absolute;
  left: 114px;
  top: 4px;
`;
const MemoTitle = styled.div`
  margin-top: 7px;
  font-size: 26px;
  line-height: 36px;
  font-weight: 700;
  color: #111;
`;
const MemoText = styled.div`
  margin-top: 23px;
  font-size: 25.8px;
  line-height: 38px;
  color: #222;
  white-space: nowrap;
`;

/* coded segment stripes, positions in page pixels */
const Bracket = styled.div`
  position: absolute;
  left: ${(p) => p.$x - 852}px;
  top: ${(p) => p.$y - 423}px;
  height: ${(p) => p.$h}px;
  width: 8px;
  border-left: 5px solid ${(p) => p.$c};
  ${(p) => (p.$open ? '' : `border-bottom: 3px solid ${p.$c};`)}
  border-top: 3px solid ${(p) => p.$c};
`;
const Node = styled.div`
  position: absolute;
  left: ${(p) => p.$x - 852 - 6}px;
  top: ${(p) => p.$y - 423 - 8}px;
  width: 17px;
  height: 16px;
  border-radius: 50%;
  background: #fff;
  border: 4px solid ${(p) => p.$c};
  z-index: 1;
`;
const SegLabel = styled.div`
  position: absolute;
  right: ${(p) => 852 + 198 - p.$right}px;
  top: ${(p) => p.$y - 423 - 17}px;
  font-size: 23px;
  line-height: 34px;
  white-space: nowrap;
  color: ${(p) => p.$c};
`;
const segGreen = '#6faa1e';
const segRed = '#e2402e';
const segYellow = '#cccc00';
const stripes = [
  { x: 1010, y: 709, h: 257, c: segGreen, node: 839, label: '..ポジティブ', right: 993 },
  { x: 1030, y: 709, h: 966, c: segRed, node: 1193, label: '..キャリア', right: 990 },
  { x: 1010, y: 1063, h: 82, c: segYellow, node: 1105, label: '..黄色', right: 990 },
  { x: 1010, y: 1196, h: 168, c: segRed, node: 1281, label: '..ネガティブ', right: 993 },
  { x: 1010, y: 1373, h: 214, c: segRed, node: 1479, label: '..ネガティブ', right: 993 },
  { x: 1010, y: 1831, h: 140, c: segGreen, node: 1917, label: '..ポジティブ', right: 993, open: true },
  { x: 1029, y: 1831, h: 140, c: '#ee7d1a', open: true },
];
const answerLines = [
  <><b>回答:</b> 難しい質問ですね。僕は心理学の分野に進</>,
  'みます。授業を一所懸命頑張って良い成績を取',
  'れば、それが安全策だと思いますし、良い仕',
  '事、良い給料がもらえると思います。僕は心理',
  '学を楽しめますし、すごく興味があります。特',
  'にカウンセリングとか、他人を助けるとか。で',
  'もそれは僕の情熱ではありません。僕はすごく',
  '創造的な人間で、アートと映画に情熱を持って',
  <>います。職業をもしも選べるなら<Hl>職業をもしも</Hl></>,
  <><Hl>選べるなら、</Hl>間違いなく映画監督を選ぶでしょ</>,
  'う。どのみち映画を作っていますし、これから',
  'も続けるでしょうし、現実に映画監督になるの',
  'が僕の夢なんです。でも、それを実現できる可',
  '能性は少ないですし、もっと現実的な目標に向',
  'かって、心理学を勉強しないといけないです。',
  '僕がこれほど愛していることをできないという',
  'のは、不公平なことだとは思います。成功でき',
  'る可能性はものすごく少ないですし、それほど',
  '報いられない仕事に残りの人生を捧げるのは、',
  '良い気分ではありません。将来、映画ビジネス',
  'で挑戦することは考えてはいますが、奇跡は期',
  '待してはいません。',
];
const memoLines = ['ジョージは困難な', 'キャリア上の葛藤', 'に直面している。', '夢を追うよりも、', '給料が高いが達成', '感の低い仕事を選', 'ぶ必要を感じてい', 'るようだ。彼はそ', 'れを「不公平なこ', 'と」と感じてい', 'る。私は彼の後悔', 'の念や疑念を感じ', 'るし、無力感さえ', '感じ取れる。', 'ジョージの選択が', '将来の生活満足度', 'にどう影響するの', 'だろうか。'];

/* ---------- retrieved segments ---------- */
const RightBody = styled.div`
  position: absolute;
  top: 82px;
  left: 0;
  right: 0;
  bottom: 0;
  background: #f5f5f5;
  display: flex;
`;
const SegRail = styled.div`
  position: relative;
  width: 48px;
  flex: none;
  border-right: 2px solid #fafafa;
`;
const SegList = styled.div`
  position: relative;
  width: 849px;
  flex: none;
  overflow: hidden;
`;
const SegTrack = styled.div`
  position: relative;
  width: 32px;
  flex: none;
  background: #fafafa;
  border-left: 2px solid #ececec;
`;
const ListHead = styled.div`
  height: 152px;
  padding: 10px 0 0 10px;
`;
const ListTitle = styled.div`
  font-size: 25.6px;
  line-height: 36px;
  font-weight: 700;
  color: #111;
  white-space: nowrap;
`;
const ListLink = styled.div`
  display: flex;
  align-items: center;
  gap: 12px;
  margin-top: 40px;
  font-size: 26px;
  font-weight: 700;
  line-height: 36px;
  color: ${NAVY};
  white-space: nowrap;
`;
const SegCard = styled.article`
  background: #fff;
  padding: 19px 0 0 20px;
  margin-bottom: 8px;
`;
const SegText = styled.div`
  font-size: 32px;
  line-height: 46px;
  color: #111;
  white-space: nowrap;
`;
const Meta = styled.div`
  display: flex;
  align-items: center;
  height: 83px;
  padding: 12px 0 0 21px;
  font-size: 25px;
  color: #888;
  white-space: nowrap;
`;
const MetaDoc = styled.span`
  display: flex;
  align-items: center;
  width: 283px;
  flex: none;
  gap: 10px;
`;
const MetaLink = styled.span`
  border-bottom: 1px solid #bbb;
  line-height: 30px;
`;
const MetaCode = styled.span`
  display: flex;
  align-items: center;
  gap: 6px;
`;
const RailBracket = styled.div`
  position: absolute;
  left: 29px;
  top: ${(p) => p.$y - 361}px;
  height: ${(p) => p.$h}px;
  width: 8px;
  border-left: 4px solid #1f66a8;
  border-top: 3px solid #1f66a8;
  border-bottom: 3px solid #1f66a8;
`;
const RailNode = styled.div`
  position: absolute;
  left: 24px;
  top: ${(p) => p.$y - 361 - 8}px;
  width: 16px;
  height: 16px;
  border-radius: 50%;
  background: #fff;
  border: 3px solid #1f66a8;
`;
const segCards = [
  { lines: ['母や父とはうまくやっています。'], doc: 8, code: '人 > 父母 (0)' },
  { lines: ['母は愛情豊かで世話好きな人で、いつも愛情を示してく', 'れます。'], doc: 8, code: '人 > 父母 (0)' },
  { lines: ['でも、少し過保護で、僕を赤ちゃんのように扱うところ', 'もあります。'], doc: 8, code: '人 > 父母 (0)' },
  { lines: ['父はそんなに愛情を見せたりはしなくて、仕事を頑張っ', 'ています。僕は父よりも母と親しくしていると思いま', 'す。'], doc: 8, code: '人 > 父母 (0)' },
  { lines: ['弟はクールです。彼は僕と同じで、そんなにワイルドで', 'もないですし、普通で、それなりに楽しい人間です。彼', 'とはたいていうまくやっています。'], doc: 8, code: '人 > 兄弟姉妹 (0)' },
  { lines: ['うちの家族はそんなに一緒にご飯を食べません。弟や僕', 'は、外食をしないといけない時が多いです。'], doc: 8, code: '人 > 兄弟姉妹 (0)' },
  { lines: ['回答: 僕はバスケットボール、アメフト、テニス、射撃、', 'アーチェリー、自転車、友人と外出、映画製作、寸劇製', '作、脚本づくり、絵画、融合音楽、ビデオゲーム、ボー', 'ドゲーム、カードゲーム、映画鑑賞などをします。'] },
];
const railMarks = [
  [531, 50], [687, 92], [889, 92], [1091, 138], [1339, 138], [1587, 92], [1789, 184],
];

/* ---------- status bar ---------- */
const Status = styled.footer`
  position: absolute;
  left: 0;
  right: 0;
  top: 1964px;
  height: 69px;
  font-size: 28px;
  color: #333;
`;
const StatItem = styled.span`
  position: absolute;
  left: ${(p) => p.$x}px;
  top: 0;
  height: 69px;
  display: flex;
  align-items: center;
  gap: ${(p) => p.$gap || 4}px;
  white-space: nowrap;
`;

export default function App() {
  return (
    <Page>
      <Global />
      <Nav />
      <RibbonBar />
      <Workspace>
        <LeftCol>
          <Panel $h={838}>
            <PanelHead>
              <Tool $x={30}><DocSystem /></Tool>
              <HeadTitle $x={54}>文書システム</HeadTitle>
              <Tools base={10} items={[
                [246, <UndoDoc />], [292, <CopyDocs />], [338, <FilterDoc />], [406, <ImportArrow />],
                [456, <DocPlus />], [501, <DocPlus folder />], [570, <Search />], [640, <Gear />],
                [710, <Restore />], [756, <Collapse />], [802, <Close />],
              ]} />
            </PanelHead>
            <Tree $h={754}>
              {docRows.map((r) => <TreeRow key={r.t} r={r} />)}
              <TreeScroll><Thumb $left={6} $top={6} $h={448} /></TreeScroll>
            </Tree>
          </Panel>
          <GreenBar />
          <Panel $h={823}>
            <PanelHead $h={70}>
              <Tool $x={28} $top={26}><CodeSystem /></Tool>
              <HeadTitle $x={55} $top={9}>コードシステム</HeadTitle>
              <Tools base={10} top={26} items={[
                [360, <TagUndo />], [431, <FilterDoc />], [500, <TagAdd />], [570, <Search />], [640, <Gear />],
                [710, <Restore />], [756, <Collapse />], [802, <Close />],
              ]} />
            </PanelHead>
            <Tree $h={753}>
              {codeRows.map((r) => <TreeRow key={r.t} r={r} />)}
              <TreeScroll><Thumb $left={6} $top={6} $h={502} /></TreeScroll>
            </Tree>
          </Panel>
        </LeftCol>

        <Panel $w={1370} $h={1685} $gap={12}>
          <PanelHead>
            <ToolPressed $x={892} />
            <Tool $x={30}><PenDoc /></Tool>
            <HeadTitle $x={55}>文書ブラウザ: ジョージ</HeadTitle>
            <Tools base={854} items={[
              [1604, <ZoomGlass />], [1650, <ZoomGlass plus />], [1695, <HundredPct />], [1766, <PanelToggle />],
              [1836, <Printer />], [1881, <Export />], [1952, <Search />], [2022, <Gear />],
              [2092, <Restore />], [2138, <Collapse />], [2184, <Close />],
            ]} />
          </PanelHead>
          <FilterRow>
            <SearchBox>
              人
              <SearchDrop>
                <I w={16} h={12}><path d="M2 2l6 8 6-8" stroke="#fff" strokeWidth="2.4" /></I>
              </SearchDrop>
            </SearchBox>
            <Tools base={854} top={30} items={[
              [1489, <OneSeg />], [1538, <OneSeg plus />], [1586, <OneSeg plus info />],
              [1645, <I w={32} h={32}><rect x="1.5" y="1.5" width="29" height="29" stroke={NAVY} strokeWidth="3" strokeDasharray="4 3" /><path d="M16 1v30" stroke={RED} strokeWidth="3" /><circle cx="16" cy="15" r="6" fill="#fff" stroke={RED} strokeWidth="3.5" /></I>],
              [1712, <Marker />],
              [1741, <I w={18} h={14}><path d="M0 0h18L9 14Z" fill="#111" /></I>],
              [1790, <Smile />], [1858, <OneSeg c={RED} undo />],
              [1919, <Links plus />], [1967, <Links />],
            ]} />
            <PenToggle>
              <PenTrack />
              <PenKnob><I w={22} h={22}><path d="M18 2 5 16l-2 4 4-1L20 5Z" fill={NAVY} stroke={NAVY} strokeWidth="1.5" /></I></PenKnob>
            </PenToggle>
          </FilterRow>
          <MidBody>
            <Gutter>
              {stripes.map((s, i) => (
                <React.Fragment key={i}>
                  <Bracket $x={s.x} $y={s.y} $h={s.h} $c={s.c} $open={s.open} />
                  {s.node && <Node $x={s.x} $y={s.node} $c={s.c} />}
                  {s.label && <SegLabel $right={s.right} $y={s.node} $c={s.c}>{s.label}</SegLabel>}
                </React.Fragment>
              ))}
            </Gutter>
            <MemoRail><MemoRailIcon><Note mark="?" /></MemoRailIcon></MemoRail>
            <NumRail>
              <NumBand $top={423} $h={53} />
              <NumBand $top={510} $h={48} />
              <NumBand $top={589} $h={88} />
              <NumBand $top={709} $h={968} />
              <NumBand $top={1712} $h={85} />
              <NumBand $top={1830} $h={140} />
              <Num $y={424}>1</Num>
              <Num $y={513}>2</Num>
              <Num $y={589}>3</Num>
              <Num $y={710}>4</Num>
              <Num $y={1713}>5</Num>
              <Num $y={1832}>6</Num>
            </NumRail>
            <DocColumn>
              <DocTitle>生活満足度</DocTitle>
              <DocSection>セクション 1 — 主なトピック</DocSection>
              <DocPara $bold $gap={29.5}>
                <Line>質問: あなたはご自身のキャリアにどれくらい満</Line>
                <Line>足していますか?</Line>
              </DocPara>
              <DocPara>
                {answerLines.map((l, i) => <Line key={i}>{l}</Line>)}
              </DocPara>
              <DocPara $bold $gap={30}>
                <Line>質問: あなたはご自身の健康にどれくらい満足し</Line>
                <Line>ていますか?</Line>
              </DocPara>
              <DocPara>
                <Line><b>回答:</b> 健康状態は良いです。スポーツをよくしま</Line>
                <Line>すし、高いレベルで競争できるくらいには身体</Line>
                <Line>的な健康です。タバコも吸いませんし、お酒も</Line>
              </DocPara>
              <HBar><HThumb /></HBar>
            </DocColumn>
            <DocScroll><Thumb $left={4} $top={8} $h={259} /></DocScroll>
            <MemoArea>
              <MemoCard>
                <MemoTop>
                  <Note mark="?" />
                  <MemoDown>
                    <I w={24} h={24}><path d="M12 0v22M2 13l10 9 10-9" stroke={NAVY} strokeWidth="3.4" /></I>
                  </MemoDown>
                </MemoTop>
                <MemoTitle>メモ 2</MemoTitle>
                <MemoText>{memoLines.map((l) => <div key={l}>{l}</div>)}</MemoText>
              </MemoCard>
            </MemoArea>
          </MidBody>
        </Panel>

        <Panel $w={929} $h={1685} $gap={12}>
          <PanelHead>
            <Tools base={2236} items={[
              [2264, <Seg />], [2384, <CodeMap />], [2453, <Bulb />], [2500, <Squares />], [2546, <Cloud />],
              [2615, <OneSeg c={RED} plus c2={GREEN} />], [2685, <Printer />], [2731, <Word />], [2778, <Excel />],
              [2826, <Export />], [2893, <Search />], [2963, <Gear />], [3033, <Restore />],
              [3079, <Collapse />], [3125, <Close />],
            ]} />
          </PanelHead>
          <RightBody>
            <SegRail>
              {railMarks.map(([y, h]) => (
                <React.Fragment key={y}>
                  <RailBracket $y={y} $h={h} />
                  <RailNode $y={y + h / 2} />
                </React.Fragment>
              ))}
            </SegRail>
            <SegList>
              <ListHead>
                <ListTitle>20 コード付セグメント (2 文書と 1 つの文書グループから)</ListTitle>
                <ListLink><Doc tone="red" pen />インタビュー - ニューヨーク &gt; ジョージ</ListLink>
              </ListHead>
              {segCards.map((c, i) => (
                <SegCard key={i}>
                  {c.lines.map((l) => <SegText key={l}>{l}</SegText>)}
                  {c.code && (
                    <Meta>
                      <MetaDoc><Doc pen /><MetaLink>ジョージ, Pos. {c.doc}</MetaLink></MetaDoc>
                      <MetaCode><CodeTag />{c.code}</MetaCode>
                    </Meta>
                  )}
                </SegCard>
              ))}
            </SegList>
            <SegTrack><Thumb $left={7} $top={7} $h={485} /></SegTrack>
          </RightBody>
        </Panel>
      </Workspace>

      <Status>
        <StatItem $x={18}><Doc tone="red" />2</StatItem>
        <StatItem $x={172} $gap={0}><PlainTag />6</StatItem>
        <StatItem $x={333}><Seg />20</StatItem>
        <StatItem $x={488} $gap={0}><Bottle />0</StatItem>
        <StatItem $x={652}><UserDoc kind="tall" /></StatItem>
        <StatItem $x={812}><UserDoc /></StatItem>
        <StatItem $x={966}><ExportDocDown /></StatItem>
        <StatItem $x={1124} $gap={5}><QueryGlass />単純なコーディング・クエリ (コードのOR組み合わせ)</StatItem>
      </Status>
    </Page>
  );
}
